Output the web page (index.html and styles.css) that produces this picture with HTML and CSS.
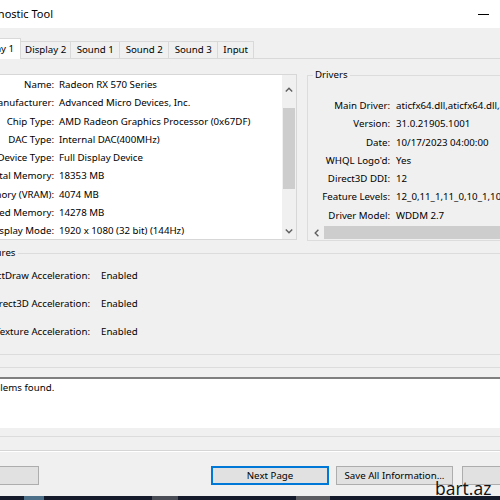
FILE: index.html
```html
<!DOCTYPE html>
<html lang="en">
<head>
  <meta charset="UTF-8">
  <meta name="viewport" content="width=device-width, initial-scale=1.0">
  <title>DirectX Diagnostic Tool</title>
  <link rel="stylesheet" href="styles.css">
</head>
<body>
  <div class="titlebar">
    <div class="title">DirectX Diagnostic Tool</div>
    <span class="min"></span>
  </div>

  <div class="tabs">
    <div class="tab active">Display 1</div>
    <div class="tab">Display 2</div>
    <div class="tab">Sound 1</div>
    <div class="tab">Sound 2</div>
    <div class="tab">Sound 3</div>
    <div class="tab tab-input">Input</div>
  </div>

  <div class="top">
    <div class="device">
      <div class="device-list">
        <div class="row"><div class="label">Name:</div><div class="value">Radeon RX 570 Series</div></div>
        <div class="row"><div class="label">Manufacturer:</div><div class="value">Advanced Micro Devices, Inc.</div></div>
        <div class="row"><div class="label">Chip Type:</div><div class="value">AMD Radeon Graphics Processor (0x67DF)</div></div>
        <div class="row"><div class="label">DAC Type:</div><div class="value">Internal DAC(400MHz)</div></div>
        <div class="row"><div class="label">Device Type:</div><div class="value">Full Display Device</div></div>
        <div class="row"><div class="label">Approx. Total Memory:</div><div class="value">18353 MB</div></div>
        <div class="row"><div class="label">Display Memory (VRAM):</div><div class="value">4074 MB</div></div>
        <div class="row"><div class="label">Shared Memory:</div><div class="value">14278 MB</div></div>
        <div class="row"><div class="label">Current Display Mode:</div><div class="value">1920 x 1080 (32 bit) (144Hz)</div></div>
      </div>
      <div class="vscroll">
        <div class="sb-btn">
          <svg width="8" height="5" viewBox="0 0 8 5"><polyline points="0.8,4.4 4,1.2 7.2,4.4" fill="none" stroke="#606060" stroke-width="1.4"/></svg>
        </div>
        <div class="thumb"></div>
        <div class="sb-fill"></div>
        <div class="sb-btn">
          <svg width="8" height="5" viewBox="0 0 8 5"><polyline points="0.8,0.6 4,3.8 7.2,0.6" fill="none" stroke="#606060" stroke-width="1.4"/></svg>
        </div>
      </div>
    </div>

    <fieldset class="drivers">
      <legend>Drivers</legend>
      <div class="driver-list">
        <div class="row"><div class="label">Main Driver:</div><div class="value">aticfx64.dll,aticfx64.dll,aticfx64.dll,amdxc64.dll</div></div>
        <div class="row"><div class="label">Version:</div><div class="value">31.0.21905.1001</div></div>
        <div class="row"><div class="label">Date:</div><div class="value">10/17/2023 04:00:00</div></div>
        <div class="row"><div class="label">WHQL Logo'd:</div><div class="value">Yes</div></div>
        <div class="row"><div class="label">Direct3D DDI:</div><div class="value">12</div></div>
        <div class="row"><div class="label">Feature Levels:</div><div class="value">12_0,11_1,11_0,10_1,10_0,9_3,9_2,9_1</div></div>
        <div class="row"><div class="label">Driver Model:</div><div class="value">WDDM 2.7</div></div>
      </div>
      <div class="hscroll">
        <div class="sb-btn">
          <svg width="5" height="8" viewBox="0 0 5 8"><polyline points="4.4,0.8 1.2,4 4.4,7.2" fill="none" stroke="#606060" stroke-width="1.4"/></svg>
        </div>
        <div class="hthumb"></div>
      </div>
    </fieldset>
  </div>

  <fieldset class="features">
    <legend>DirectX Features</legend>
    <div class="row"><div class="label">DirectDraw Acceleration:</div><div class="value">Enabled</div></div>
    <div class="row"><div class="label">Direct3D Acceleration:</div><div class="value">Enabled</div></div>
    <div class="row"><div class="label">AGP Texture Acceleration:</div><div class="value">Enabled</div></div>
  </fieldset>

  <fieldset class="notes">
    <legend>Notes</legend>
    <div class="notes-box">No problems found.</div>
  </fieldset>

  <div class="sep"></div>

  <div class="buttons">
    <button class="btn">Help</button>
    <button class="btn next">Next Page</button>
    <button class="btn save">Save All Information...</button>
    <button class="btn exit">Exit</button>
  </div>

  <div class="taskbar">
    <span class="tb-item tb-blue"></span>
    <span class="tb-item tb-grey1"></span>
    <span class="tb-item tb-grey2"></span>
  </div>

  <div class="watermark">bart.az</div>
</body>
</html>
```

FILE: styles.css
```css
* {
  margin: 0;
  padding: 0;
  box-sizing: border-box;
}

body {
  width: 500px;
  height: 500px;
  overflow: hidden;
  position: relative;
  background: #f0f0f0;
  color: #000;
  font-family: "Noto Sans", sans-serif;
  font-size: 9.7px;
  line-height: 14px;
}

/* window title */
.titlebar {
  height: 28px;
  background: #fff;
  display: flex;
  align-items: center;
  justify-content: space-between;
}

.title {
  width: 53px;
  display: flex;
  justify-content: flex-end;
  white-space: nowrap;
  font-size: 11px;
}

.min {
  width: 11px;
  height: 1px;
  background: #000;
  margin-right: 11px;
}

/* tabs */
.tabs {
  height: 31px;
  display: flex;
  align-items: flex-end;
  border-bottom: 1px solid #d9d9d9;
  margin-left: -34px;
}

.tab {
  height: 17px;
  min-width: 50px;
  line-height: 15px;
  padding: 0 4px;
  text-align: center;
  border: 1px solid #d9d9d9;
  border-bottom: none;
  margin-right: -1px;
  background: #f0f0f0;
  white-space: nowrap;
}

.tab.tab-input {
  min-width: 37px;
}

.tab.active {
  height: 21px;
  line-height: 19px;
  padding: 0 6px;
  margin-bottom: -1px;
  background: #fff;
  position: relative;
  z-index: 1;
}

/* label / value rows */
.row {
  display: grid;
  white-space: nowrap;
}

.label {
  display: flex;
  justify-content: flex-end;
  white-space: nowrap;
}

/* top area */
.top {
  display: flex;
  align-items: flex-start;
  margin-top: 9px;
}

.device {
  display: flex;
  flex: none;
  width: 307px;
  height: 166px;
  margin-left: -10px;
  margin-top: 6px;
  background: #fff;
  border: 1px solid #d7d7d7;
}

.device-list {
  flex: 1;
  overflow: hidden;
  padding-top: 1px;
}

.device-list .row {
  grid-template-columns: 63px auto;
  column-gap: 5px;
  line-height: 18.25px;
}

.vscroll {
  width: 14px;
  display: flex;
  flex-direction: column;
  background: #f0f0f0;
  padding-top: 6px;
}

.sb-btn {
  height: 16px;
  display: flex;
  align-items: center;
  justify-content: center;
}

.thumb {
  height: 81px;
  margin: 11px 1px 0;
  background: #cdcdcd;
}

.sb-fill {
  flex: 1;
}

fieldset {
  border: 1px solid #dcdcdc;
  min-width: 0;
}

legend {
  padding: 0 2px;
  line-height: 14px;
}

.drivers {
  width: 230px;
  margin-left: 10px;
  flex: none;
}

.drivers legend {
  margin-left: 5px;
}

.driver-list {
  margin-top: 15px;
}

.driver-list .row {
  grid-template-columns: 82px auto;
  column-gap: 6px;
  line-height: 18.3px;
}

.hscroll {
  display: flex;
  height: 15px;
  background: #f0f0f0;
}

.hscroll .sb-btn {
  width: 16px;
  height: 15px;
}

.hthumb {
  flex: 1;
  margin: 1px 0;
  background: #cdcdcd;
}

/* features */
.features {
  width: 600px;
  margin-left: -70px;
  margin-top: 5px;
  padding: 2px 0 8px;
}

.features legend,
.notes legend {
  margin-left: 8px;
}

.features .row {
  grid-template-columns: 159px auto;
  column-gap: 11px;
  line-height: 28px;
}

/* notes */
.notes {
  width: 600px;
  margin-left: -70px;
  margin-top: 5px;
  padding-bottom: 8px;
}

.notes-box {
  height: 51px;
  margin-top: 3px;
  padding: 2px 0 0 32px;
  background: #fff;
  border-top: 2px solid #7f7f7f;
  white-space: nowrap;
}

.sep {
  margin-top: 13px;
  border-top: 1px solid #d5d5d5;
  border-bottom: 1px solid #fff;
}

/* buttons */
.buttons {
  display: flex;
  margin-top: 14px;
  margin-left: -79px;
}

.btn {
  width: 118px;
  height: 19px;
  flex: none;
  border: 1px solid #adadad;
  background: #e1e1e1;
  font: inherit;
  color: #000;
  white-space: nowrap;
}

.btn.next {
  margin-left: 172px;
  border: 2px solid #0078d7;
}

.btn.save {
  width: 117px;
  margin-left: 7px;
}

.btn.exit {
  margin-left: 9px;
}

.taskbar {
  height: 4px;
  margin-top: 11px;
  background: #161b2b;
  display: flex;
}

.tb-item {
  display: block;
  height: 100%;
}

.tb-blue {
  width: 20px;
  margin-left: 24px;
  background: #4d6f88;
}

.tb-grey1 {
  width: 26px;
  margin-left: 108px;
  background: #4a4d55;
}

.tb-grey2 {
  width: 34px;
  margin-left: 118px;
  background: #5a5c62;
}

.watermark {
  position: absolute;
  left: 435px;
  top: 480px;
  font-family: "Open Sans", sans-serif;
  font-size: 17.5px;
  line-height: 17px;
  color: #111;
}
```
